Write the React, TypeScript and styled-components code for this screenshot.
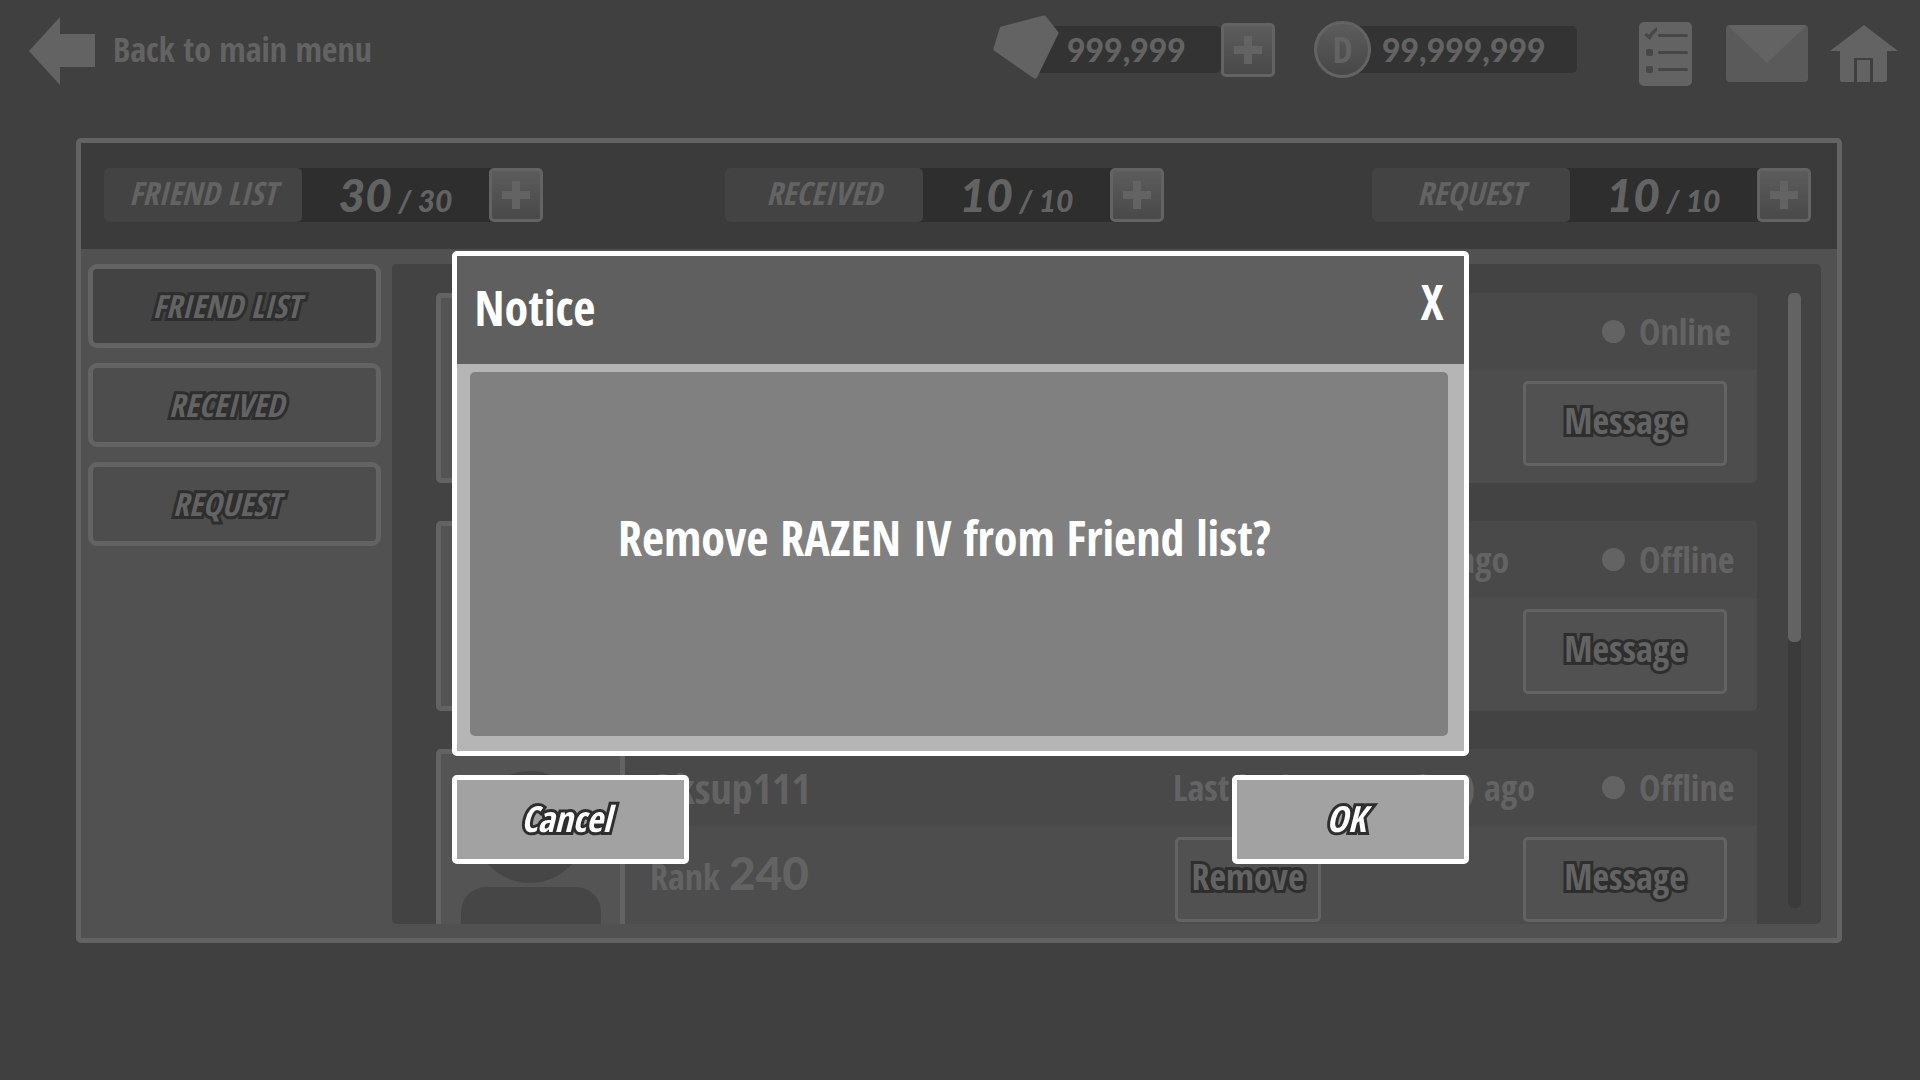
import React from 'react';
import styled, { createGlobalStyle, css } from 'styled-components';

const color = {
  page: '#404040',
  line: '#636363',
  header: '#3b3b3b',
  panel: '#515151',
  well: '#434343',
  cardHead: '#494949',
  cardBody: '#4d4d4d',
  dark: '#2e2e2e',
  currency: '#333333',
};

const narrow = '"Open Sans Condensed", "Roboto Condensed", "Open Sans", sans-serif';
const round = 'Lato, "Open Sans", sans-serif';

const GlobalStyle = createGlobalStyle`
  * { box-sizing: border-box; }
  body {
    margin: 0;
    background: ${color.page};
    color: ${color.line};
    font-family: ${narrow};
    font-weight: 700;
  }
  button { font: inherit; color: inherit; padding: 0; cursor: pointer; }
  h2, p, ul { margin: 0; padding: 0; font: inherit; }
`;

const outlined = css`
  -webkit-text-stroke: 6px ${color.dark};
  paint-order: stroke fill;
  stroke-linejoin: round;
`;

const Page = styled.div`
  min-height: 100vh;
`;

const TopBar = styled.header`
  display: flex;
  align-items: center;
  height: 102px;
  margin-bottom: 36px;
  padding: 0 22px 0 29px;
`;

const BackLink = styled.a`
  display: flex;
  align-items: center;
  gap: 18px;
  margin-right: auto;
  color: inherit;
  text-decoration: none;
  font-size: 34px;
  line-height: 40px;
  span { padding-bottom: 4px; }
`;

const Currencies = styled.div`
  display: flex;
  gap: 39px;
  padding-bottom: 3px;
`;

const Currency = styled.div`
  display: flex;
  align-items: center;
`;

const Gem = styled.svg`
  position: relative;
  margin: -6px -20px 0 0;
`;

const Coin = styled.span`
  position: relative;
  display: grid;
  place-items: center;
  width: 57px;
  height: 57px;
  margin-right: -20px;
  border: 3px solid ${color.line};
  border-radius: 50%;
  background: linear-gradient(#5c5c5c, #474747);
  font-size: 36px;
  line-height: 40px;
`;

const Amount = styled.span<{ $wide?: boolean }>`
  width: ${p => (p.$wide ? 226 : 182)}px;
  height: 47px;
  padding-left: ${p => (p.$wide ? 31 : 28)}px;
  border-radius: 0 5px 5px 0;
  background: ${color.currency};
  font: 900 32px/48px ${round};
`;

const PlusButton = styled.button`
  position: relative;
  display: grid;
  place-items: center;
  width: 54px;
  height: 54px;
  border: 3px solid ${color.line};
  border-radius: 5px;
  background: linear-gradient(#5c5c5c, #494949);
`;

const Shortcuts = styled.nav`
  display: flex;
  align-items: center;
  margin-left: 62px;
  padding-top: 5px;
`;

const IconButton = styled.button`
  display: flex;
  border: 0;
  background: none;
  & + & { margin-left: 34px; }
  & + & + & { margin-left: 22px; }
`;

const Panel = styled.main`
  margin: 0 78px 0 76px;
  border: 5px solid ${color.line};
  border-radius: 5px;
  background: ${color.panel};
`;

const Counters = styled.div`
  display: flex;
  gap: 182px;
  padding: 25px 26px 27px 23px;
  background: ${color.header};
`;

const Counter = styled.div`
  display: flex;
  height: 54px;
  background: ${color.dark};
  border-radius: 5px;
  &:last-child { margin-left: auto; }
`;

const CounterName = styled.span`
  width: 198px;
  height: 54px;
  border-radius: 5px;
  background: ${color.well};
  font-size: 32px;
  font-style: italic;
  line-height: 50px;
  text-align: center;
`;

const CounterValue = styled.span`
  width: 187px;
  font: italic 900 30px/54px ${round};
  text-align: center;
  strong { font-size: 46px; font-weight: 900; }
`;

const Columns = styled.div`
  display: flex;
  gap: 11px;
  padding: 15px 16px 14px 7px;
`;

const Tabs = styled.nav`
  display: flex;
  flex: 0 0 293px;
  flex-direction: column;
  gap: 15px;
`;

const Tab = styled.button<{ $active?: boolean }>`
  height: 84px;
  padding: 0 16px 2px 0;
  border: 5px solid ${color.line};
  border-radius: 9px;
  background: ${p => (p.$active ? color.well : color.cardBody)};
  font-size: 32px;
  font-style: italic;
  ${outlined}
`;

const Well = styled.section`
  display: flex;
  flex: 1;
  justify-content: space-between;
  height: 660px;
  padding: 29px 20px 0 44px;
  overflow: hidden;
  border-radius: 5px;
  background: ${color.well};
`;

const FriendList = styled.ul`
  display: flex;
  flex: 1;
  flex-direction: column;
  gap: 38px;
  margin-right: 31px;
  list-style: none;
`;

const Card = styled.li`
  display: flex;
  flex: none;
  height: 190px;
  border-radius: 5px;
  background: ${color.cardBody};
`;

const Avatar = styled.svg`
  flex: none;
  width: 189px;
  height: 190px;
  border: 5px solid ${color.line};
  border-radius: 5px;
  background: #545454;
`;

const Details = styled.div`
  flex: 1;
`;

const CardHead = styled.div`
  display: grid;
  grid-template-columns: 1fr 429px 155px;
  align-items: center;
  height: 77px;
  padding-left: 25px;
  border-radius: 0 5px 0 0;
  background: ${color.cardHead};
  font-size: 36px;
  line-height: 70px;
  white-space: nowrap;
`;

const Name = styled.span`
  font-size: 42px;
`;

const Status = styled.span`
  display: flex;
  align-items: center;
  gap: 14px;
  &::before {
    content: '';
    width: 23px;
    height: 23px;
    border-radius: 50%;
    background: ${color.line};
  }
`;

const CardActions = styled.div`
  display: flex;
  justify-content: flex-end;
  gap: 202px;
  padding: 11px 30px 0 25px;
`;

const Rank = styled.span`
  margin-right: auto;
  font-size: 36px;
  line-height: 72px;
  strong { font: 900 46px/72px ${round}; }
`;

const ActionButton = styled.button<{ $small?: boolean }>`
  width: ${p => (p.$small ? 146 : 204)}px;
  height: 85px;
  padding-bottom: 6px;
  border: 3px solid ${color.line};
  border-radius: 5px;
  background: ${color.panel};
  font-size: 36px;
  ${outlined}
`;

const ScrollTrack = styled.div`
  width: 13px;
  height: 615px;
  border-radius: 5px;
  background: ${color.header};
`;

const ScrollThumb = styled.div`
  height: 349px;
  border-radius: 5px;
  background: ${color.line};
`;

const Overlay = styled.div`
  position: fixed;
  inset: 0;
  display: flex;
  align-items: flex-start;
  justify-content: center;
  padding-top: 251px;
  color: #fff;
`;

const Dialog = styled.section`
  width: 1017px;
  max-width: 94%;
`;

const DialogFrame = styled.div`
  overflow: hidden;
  border: 5px solid #fff;
  border-radius: 5px;
  background: #b5b5b5;
`;

const DialogHead = styled.div`
  display: flex;
  align-items: center;
  justify-content: space-between;
  height: 108px;
  padding: 0 20px 4px 18px;
  background: #5f5f5f;
  font-size: 48px;
  line-height: 64px;
`;

const CloseButton = styled.button`
  padding-bottom: 12px;
  border: 0;
  background: none;
`;

const DialogMessage = styled.p`
  display: grid;
  place-items: center;
  height: 364px;
  margin: 8px 16px 15px 13px;
  padding: 0 28px 34px 0;
  border-radius: 5px;
  background: #808080;
  font-size: 48px;
`;

const DialogActions = styled.div`
  display: flex;
  justify-content: space-between;
  margin-top: 19px;
`;

const DialogButton = styled.button`
  width: 237px;
  height: 89px;
  padding: 0 8px 2px 0;
  border: 5px solid #fff;
  border-radius: 5px;
  background: #a2a2a2;
  font-size: 36px;
  font-style: italic;
  ${outlined}
`;

const Plus = ({ label }: { label: string }) => (
  <PlusButton aria-label={label}>
    <svg width="28" height="28" viewBox="0 0 28 28" fill={color.line}>
      <path d="M10 0h8v10h10v8H18v10h-8V18H0v-8h10z" />
    </svg>
  </PlusButton>
);

const counters = [
  { name: 'FRIEND LIST', value: 30, max: 30 },
  { name: 'RECEIVED', value: 10, max: 10 },
  { name: 'REQUEST', value: 10, max: 10 },
];

interface Friend {
  id: number;
  name?: string;
  rank?: number;
  seen?: string;
  status: string;
}

const friends: Friend[] = [
  { id: 1, status: 'Online' },
  { id: 2, seen: 'Last login 1 Hour(S) ago', status: 'Offline' },
  { id: 3, name: 'Oksup111', rank: 240, seen: 'Last login 1 Month(S) ago', status: 'Offline' },
];

export default function App() {
  return (
    <Page>
      <GlobalStyle />
      <TopBar>
        <BackLink href="#menu">
          <svg width="66" height="68" viewBox="0 0 66 68" fill={color.line}>
            <path d="M0 34 31 0V17H66V50H31V68z" />
          </svg>
          <span>Back to main menu</span>
        </BackLink>
        <Currencies>
          <Currency>
            <Gem width="66" height="64" viewBox="0 0 66 64">
              <path
                d="M9 14 51 3 63 18 42 61 3 34z"
                fill={color.line}
                stroke={color.line}
                strokeWidth="5"
                strokeLinejoin="round"
              />
            </Gem>
            <Amount>999,999</Amount>
            <Plus label="Add gems" />
          </Currency>
          <Currency>
            <Coin>D</Coin>
            <Amount $wide>99,999,999</Amount>
          </Currency>
        </Currencies>
        <Shortcuts>
          <IconButton aria-label="Missions">
            <svg width="53" height="64" viewBox="0 0 53 64">
              <rect width="53" height="64" rx="5" fill={color.line} />
              <g stroke="#474747" strokeWidth="3" strokeLinecap="round">
                <path d="M20.500 13.500H47.500M20.500 30.500H47.500M20.500 47.500H47.500" />
              </g>
              <path d="M5 13 8 11 10 13Q13 8 18 5V9Q13 13 11 18z" fill="#474747" />
              <rect x="7" y="27" width="7" height="7" rx="2" fill="#474747" />
              <rect x="7" y="44" width="7" height="7" rx="2" fill="#474747" />
            </svg>
          </IconButton>
          <IconButton aria-label="Mail">
            <svg width="82" height="57" viewBox="0 0 82 57">
              <rect width="82" height="57" rx="4" fill="#5a5a5a" />
              <path d="M2 1Q3 0 5 0H77Q79 0 80 1L41 38z" fill={color.line} />
            </svg>
          </IconButton>
          <IconButton aria-label="Home">
            <svg width="68" height="57" viewBox="0 0 68 57" fill={color.line}>
              <path d="M34 0 68 26H57V55Q57 57 55 57H43V33H24V57H12Q10 57 10 55V26H0z" />
              <path d="M27 35H40V57H27z" />
            </svg>
          </IconButton>
        </Shortcuts>
      </TopBar>

      <Panel>
        <Counters>
          {counters.map(c => (
            <Counter key={c.name}>
              <CounterName>{c.name}</CounterName>
              <CounterValue>
                <strong>{c.value}</strong> / {c.max}
              </CounterValue>
              <Plus label={`Expand ${c.name}`} />
            </Counter>
          ))}
        </Counters>
        <Columns>
          <Tabs>
            {counters.map((c, i) => (
              <Tab key={c.name} $active={i === 0}>{c.name}</Tab>
            ))}
          </Tabs>
          <Well>
            <FriendList>
              {friends.map(f => (
                <Card key={f.id}>
                  <Avatar viewBox="0 0 179 180" fill="#464646">
                    <circle cx="89" cy="73" r="56" />
                    <rect x="20" y="133" width="140" height="80" rx="25" />
                  </Avatar>
                  <Details>
                    <CardHead>
                      <Name>{f.name}</Name>
                      <span>{f.seen}</span>
                      <Status>{f.status}</Status>
                    </CardHead>
                    <CardActions>
                      {f.rank && <Rank>Rank <strong>{f.rank}</strong></Rank>}
                      {f.rank && <ActionButton $small>Remove</ActionButton>}
                      <ActionButton>Message</ActionButton>
                    </CardActions>
                  </Details>
                </Card>
              ))}
            </FriendList>
            <ScrollTrack>
              <ScrollThumb />
            </ScrollTrack>
          </Well>
        </Columns>
      </Panel>

      <Overlay>
        <Dialog role="dialog" aria-modal="true" aria-labelledby="notice-title">
          <DialogFrame>
            <DialogHead>
              <h2 id="notice-title">Notice</h2>
              <CloseButton aria-label="Close">X</CloseButton>
            </DialogHead>
            <DialogMessage>Remove RAZEN IV from Friend list?</DialogMessage>
          </DialogFrame>
          <DialogActions>
            <DialogButton>Cancel</DialogButton>
            <DialogButton>OK</DialogButton>
          </DialogActions>
        </Dialog>
      </Overlay>
    </Page>
  );
}
